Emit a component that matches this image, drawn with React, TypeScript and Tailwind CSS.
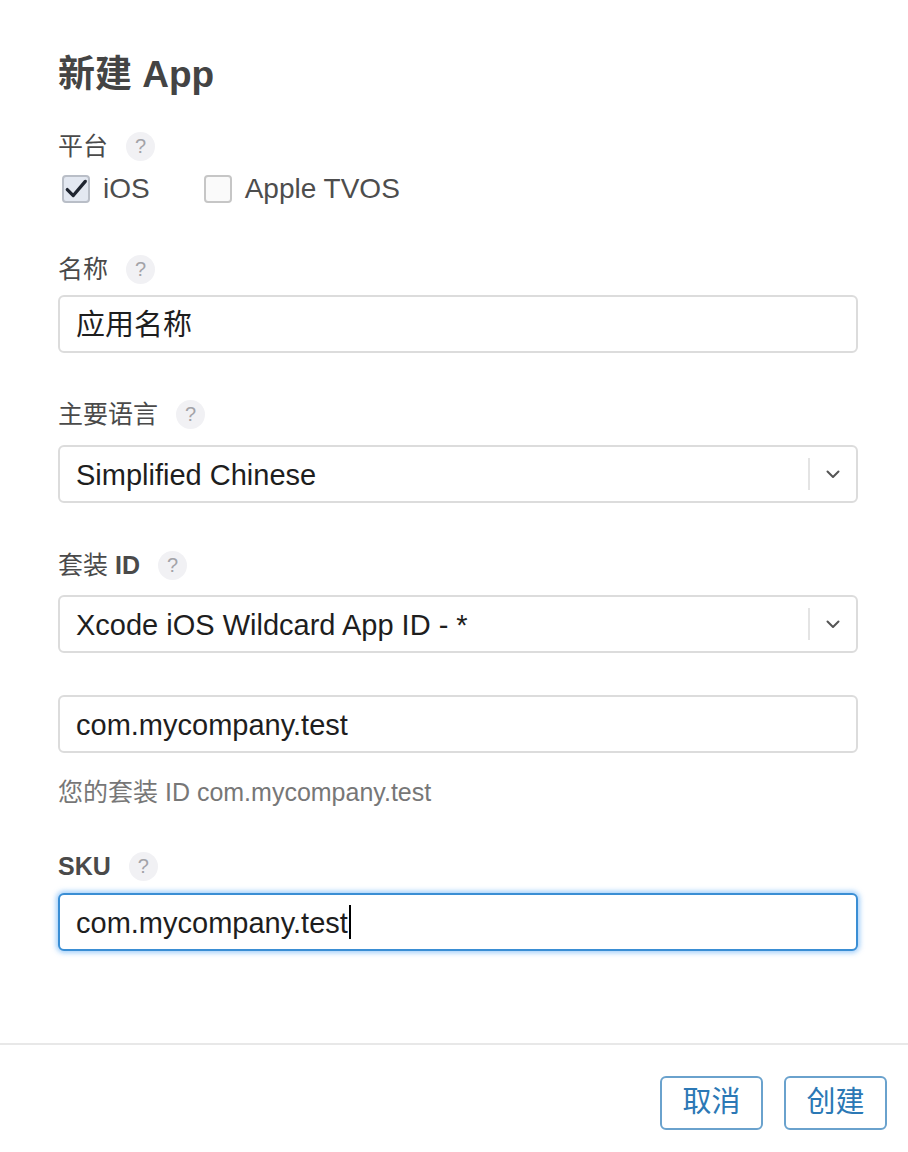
const font = "font-['Liberation_Sans','Noto_Sans_CJK_SC',sans-serif]";

function Help() {
  return (
    <span className="ml-[18px] inline-flex h-[29px] w-[29px] items-center justify-center rounded-full bg-[#f1f1f4] text-[20px] leading-none text-[#a3a3a8]">
      ?
    </span>
  );
}

function Label({ text, bold, className = "" }: { text: React.ReactNode; bold?: boolean; className?: string }) {
  return (
    <div className={`flex h-[30px] items-center ${className}`}>
      <span className={`text-[25px] leading-[30px] text-[#4a4a4a] ${bold ? "font-bold" : ""}`}>{text}</span>
      <Help />
    </div>
  );
}

function Checkbox({ checked, label }: { checked?: boolean; label: string }) {
  return (
    <div className="flex items-center">
      <span
        className={`ml-[4px] flex h-[28px] w-[28px] items-center justify-center rounded-[4px] border-2 ${
          checked ? "border-[#b9bec7] bg-[#e3e8f1]" : "border-[#c6c6c6] bg-[#fafafa]"
        }`}
      >
        {checked && (
          <svg width="24" height="22" viewBox="0 0 22 20" fill="none">
            <path d="M3 10.5 L8.5 16 L19.5 3" stroke="#1f2530" strokeWidth="3" strokeLinecap="round" strokeLinejoin="round" />
          </svg>
        )}
      </span>
      <span className="ml-[13px] text-[28px] leading-[30px] text-[#4d4d4d]">{label}</span>
    </div>
  );
}

function Field({ children, focused }: { children: React.ReactNode; focused?: boolean }) {
  return (
    <div
      className={`flex h-[58px] items-center rounded-[6px] bg-white pl-[16px] pt-[4px] text-[29px] text-[#1e1e1e] ${
        focused
          ? "border-2 border-[#3a8ed4] shadow-[0_0_5px_2px_rgba(90,170,245,0.55)]"
          : "border-2 border-[#dcdcdc]"
      }`}
    >
      {children}
    </div>
  );
}

function Select({ value }: { value: string }) {
  return (
    <Field>
      <span className="flex-1">{value}</span>
      <span className="-mt-[4px] h-[32px] w-[2px] bg-[#e4e4e4]" />
      <span className="-mt-[4px] flex w-[46px] items-center justify-center">
        <svg width="14" height="9" viewBox="0 0 14 9" fill="none">
          <path d="M1.5 1.5 L7 7 L12.5 1.5" stroke="#555" strokeWidth="2" strokeLinecap="round" strokeLinejoin="round" />
        </svg>
      </span>
    </Field>
  );
}

function Button({ children }: { children: React.ReactNode }) {
  return (
    <button className="flex h-[54px] w-[103px] items-center justify-center rounded-[6px] border-2 border-[#6aa2cd] bg-white text-[29px] text-[#2b78b5]">
      {children}
    </button>
  );
}

export default function App() {
  return (
    <div className={`h-[1152px] w-[908px] bg-white ${font}`}>
      <div className="pl-[58px] pr-[50px] pt-[55px]">
        <h1 className="text-[37px] font-semibold leading-[40px] text-[#444]">新建 App</h1>

        <Label text="平台" className="mt-[36px]" />
        <div className="mt-[13px] flex h-[30px] items-center gap-[50px]">
          <Checkbox checked label="iOS" />
          <Checkbox label="Apple TVOS" />
        </div>

        <Label text="名称" className="mt-[50px]" />
        <div className="mt-[11px]">
          <Field>应用名称</Field>
        </div>

        <Label text="主要语言" className="mt-[46px]" />
        <div className="mt-[16px]">
          <Select value="Simplified Chinese" />
        </div>

        <Label text={<>套装 <b>ID</b></>} className="mt-[47px]" />
        <div className="mt-[15px]">
          <Select value="Xcode iOS Wildcard App ID - *" />
        </div>

        <div className="mt-[42px]">
          <Field>com.mycompany.test</Field>
        </div>
        <div className="mt-[24px] h-[30px] text-[25px] leading-[30px] text-[#777]">您的套装 ID com.mycompany.test</div>

        <Label text="SKU" bold className="mt-[44px]" />
        <div className="mt-[12px]">
          <Field focused>
            com.mycompany.test
            <span className="-mt-[4px] ml-[1px] h-[34px] w-[2px] bg-black" />
          </Field>
        </div>
      </div>

      <div className="mt-[92px] h-[2px] bg-[#e8e8e8]" />

      <div className="mt-[31px] flex justify-end gap-[21px] pr-[21px]">
        <Button>取消</Button>
        <Button>创建</Button>
      </div>
    </div>
  );
}
